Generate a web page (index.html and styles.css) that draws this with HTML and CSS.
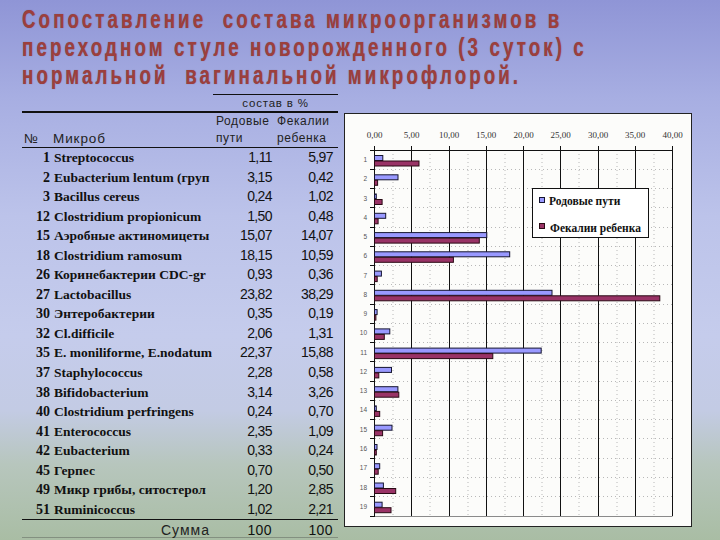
FILE: index.html
```html
<!DOCTYPE html>
<html lang="ru">
<head>
<meta charset="utf-8">
<link rel="stylesheet" href="styles.css">
</head>
<body>
<div class="page">
  <h1 class="title">
    <span class="tl">Сопоставление&nbsp; состава микроорганизмов в</span>
    <span class="tl">переходном стуле новорожденного (3 суток) с</span>
    <span class="tl">нормальной&nbsp; вагинальной микрофлорой.</span>
  </h1>
  <div class="content">
    <div class="table">
      <div class="hdr-top">состав в %</div>
      <div class="hdr">
        <div class="h-no">№</div>
        <div class="h-name">Микроб</div>
        <div class="h-c1">Родовые<br>пути</div>
        <div class="h-c2">Фекалии<br>ребенка</div>
      </div>
      <div class="rows">
        <div class="n">1</div><div class="nm">Streptococcus</div><div class="v">1,11</div><div class="v">5,97</div>
        <div class="n">2</div><div class="nm">Eubacterium lentum (груп</div><div class="v">3,15</div><div class="v">0,42</div>
        <div class="n">3</div><div class="nm">Bacillus cereus</div><div class="v">0,24</div><div class="v">1,02</div>
        <div class="n">12</div><div class="nm">Clostridium propionicum</div><div class="v">1,50</div><div class="v">0,48</div>
        <div class="n">15</div><div class="nm">Аэробные актиномицеты</div><div class="v">15,07</div><div class="v">14,07</div>
        <div class="n">18</div><div class="nm">Clostridium ramosum</div><div class="v">18,15</div><div class="v">10,59</div>
        <div class="n">26</div><div class="nm">Коринебактерии CDC-gr</div><div class="v">0,93</div><div class="v">0,36</div>
        <div class="n">27</div><div class="nm">Lactobacillus</div><div class="v">23,82</div><div class="v">38,29</div>
        <div class="n">30</div><div class="nm">Энтеробактерии</div><div class="v">0,35</div><div class="v">0,19</div>
        <div class="n">32</div><div class="nm">Cl.difficile</div><div class="v">2,06</div><div class="v">1,31</div>
        <div class="n">35</div><div class="nm">E. moniliforme, E.nodatum</div><div class="v">22,37</div><div class="v">15,88</div>
        <div class="n">37</div><div class="nm">Staphylococcus</div><div class="v">2,28</div><div class="v">0,58</div>
        <div class="n">38</div><div class="nm">Bifidobacterium</div><div class="v">3,14</div><div class="v">3,26</div>
        <div class="n">40</div><div class="nm">Clostridium perfringens</div><div class="v">0,24</div><div class="v">0,70</div>
        <div class="n">41</div><div class="nm">Enterococcus</div><div class="v">2,35</div><div class="v">1,09</div>
        <div class="n">42</div><div class="nm">Eubacterium</div><div class="v">0,33</div><div class="v">0,24</div>
        <div class="n">45</div><div class="nm">Герпес</div><div class="v">0,70</div><div class="v">0,50</div>
        <div class="n">49</div><div class="nm">Микр грибы, ситостерол</div><div class="v">1,20</div><div class="v">2,85</div>
        <div class="n">51</div><div class="nm">Ruminicoccus</div><div class="v">1,02</div><div class="v">2,21</div>
      </div>
      <div class="sum">
        <div class="s-lbl">Сумма</div><div class="v">100</div><div class="v">100</div>
      </div>
    </div>
    <div class="chart">
      <svg class="chart-svg" width="346" height="412" viewBox="0 0 346 412">
        <g class="minor" stroke="#b8b8b8" stroke-width="1" stroke-dasharray="1 3">
          <line x1="48" y1="36" x2="48" y2="402"/><line x1="85" y1="36" x2="85" y2="402"/>
          <line x1="123" y1="36" x2="123" y2="402"/><line x1="160" y1="36" x2="160" y2="402"/>
          <line x1="197" y1="36" x2="197" y2="402"/><line x1="234" y1="36" x2="234" y2="402"/>
          <line x1="272" y1="36" x2="272" y2="402"/><line x1="309" y1="36" x2="309" y2="402"/>
          <line x1="30" y1="55.5" x2="327" y2="55.5"/><line x1="30" y1="74.5" x2="327" y2="74.5"/>
          <line x1="30" y1="93.5" x2="327" y2="93.5"/><line x1="30" y1="113.5" x2="327" y2="113.5"/>
          <line x1="30" y1="132.5" x2="327" y2="132.5"/><line x1="30" y1="151.5" x2="327" y2="151.5"/>
          <line x1="30" y1="170.5" x2="327" y2="170.5"/><line x1="30" y1="190.5" x2="327" y2="190.5"/>
          <line x1="30" y1="209.5" x2="327" y2="209.5"/><line x1="30" y1="228.5" x2="327" y2="228.5"/>
          <line x1="30" y1="247.5" x2="327" y2="247.5"/><line x1="30" y1="267.5" x2="327" y2="267.5"/>
          <line x1="30" y1="286.5" x2="327" y2="286.5"/><line x1="30" y1="305.5" x2="327" y2="305.5"/>
          <line x1="30" y1="324.5" x2="327" y2="324.5"/><line x1="30" y1="344.5" x2="327" y2="344.5"/>
          <line x1="30" y1="363.5" x2="327" y2="363.5"/><line x1="30" y1="382.5" x2="327" y2="382.5"/>
        </g>
        <line x1="29.5" y1="402.5" x2="327.5" y2="402.5" stroke="#8a8a8a" stroke-width="1"/>
        <g stroke="#111" stroke-width="1">
          <line x1="66.5" y1="32" x2="66.5" y2="402"/><line x1="104.5" y1="32" x2="104.5" y2="402"/>
          <line x1="141.5" y1="32" x2="141.5" y2="402"/><line x1="178.5" y1="32" x2="178.5" y2="402"/>
          <line x1="215.5" y1="32" x2="215.5" y2="402"/><line x1="253.5" y1="32" x2="253.5" y2="402"/>
          <line x1="290.5" y1="32" x2="290.5" y2="402"/><line x1="327.5" y1="32" x2="327.5" y2="402"/>
          <line x1="29.5" y1="32" x2="29.5" y2="403"/>
          <line x1="29.5" y1="36.5" x2="327.5" y2="36.5"/>
          <line x1="25" y1="36.5" x2="29.5" y2="36.5"/><line x1="25" y1="55.5" x2="29.5" y2="55.5"/>
          <line x1="25" y1="74.5" x2="29.5" y2="74.5"/><line x1="25" y1="93.5" x2="29.5" y2="93.5"/>
          <line x1="25" y1="113.5" x2="29.5" y2="113.5"/><line x1="25" y1="132.5" x2="29.5" y2="132.5"/>
          <line x1="25" y1="151.5" x2="29.5" y2="151.5"/><line x1="25" y1="170.5" x2="29.5" y2="170.5"/>
          <line x1="25" y1="190.5" x2="29.5" y2="190.5"/><line x1="25" y1="209.5" x2="29.5" y2="209.5"/>
          <line x1="25" y1="228.5" x2="29.5" y2="228.5"/><line x1="25" y1="247.5" x2="29.5" y2="247.5"/>
          <line x1="25" y1="267.5" x2="29.5" y2="267.5"/><line x1="25" y1="286.5" x2="29.5" y2="286.5"/>
          <line x1="25" y1="305.5" x2="29.5" y2="305.5"/><line x1="25" y1="324.5" x2="29.5" y2="324.5"/>
          <line x1="25" y1="344.5" x2="29.5" y2="344.5"/><line x1="25" y1="363.5" x2="29.5" y2="363.5"/>
          <line x1="25" y1="382.5" x2="29.5" y2="382.5"/><line x1="25" y1="402.5" x2="29.5" y2="402.5"/>
        </g>
        <g class="xlab" text-anchor="middle">
          <text x="29.5" y="24">0,00</text><text x="66.5" y="24">5,00</text>
          <text x="104" y="24">10,00</text><text x="141" y="24">15,00</text>
          <text x="178.5" y="24">20,00</text><text x="215.5" y="24">25,00</text>
          <text x="253" y="24">30,00</text><text x="290" y="24">35,00</text>
          <text x="327.5" y="24">40,00</text>
        </g>
        <g class="ylab" text-anchor="end">
          <text x="22" y="48">1</text><text x="22" y="67.3">2</text><text x="22" y="86.5">3</text>
          <text x="22" y="105.8">4</text><text x="22" y="125">5</text><text x="22" y="144.3">6</text>
          <text x="22" y="163.6">7</text><text x="22" y="182.8">8</text><text x="22" y="202.1">9</text>
          <text x="22" y="221.4">10</text><text x="22" y="240.6">11</text><text x="22" y="259.9">12</text>
          <text x="22" y="279.2">13</text><text x="22" y="298.4">14</text><text x="22" y="317.7">15</text>
          <text x="22" y="337">16</text><text x="22" y="356.2">17</text><text x="22" y="375.5">18</text>
          <text x="22" y="394.7">19</text>
        </g>
        <g class="bars-a" fill="#9999ff" stroke="#151530" stroke-width="1">
          <rect x="29.5" y="41.5" width="8.3" height="5"/>
          <rect x="29.5" y="60.8" width="23.5" height="5"/>
          <rect x="29.5" y="80" width="1.8" height="5"/>
          <rect x="29.5" y="99.3" width="11.2" height="5"/>
          <rect x="29.5" y="118.6" width="112.3" height="5"/>
          <rect x="29.5" y="137.8" width="135.2" height="5"/>
          <rect x="29.5" y="157.1" width="6.9" height="5"/>
          <rect x="29.5" y="176.3" width="177.5" height="5"/>
          <rect x="29.5" y="195.6" width="2.6" height="5"/>
          <rect x="29.5" y="214.9" width="15.3" height="5"/>
          <rect x="29.5" y="234.1" width="166.7" height="5"/>
          <rect x="29.5" y="253.4" width="17" height="5"/>
          <rect x="29.5" y="272.7" width="23.4" height="5"/>
          <rect x="29.5" y="291.9" width="1.8" height="5"/>
          <rect x="29.5" y="311.2" width="17.5" height="5"/>
          <rect x="29.5" y="330.5" width="2.5" height="5"/>
          <rect x="29.5" y="349.7" width="5.2" height="5"/>
          <rect x="29.5" y="369" width="8.9" height="5"/>
          <rect x="29.5" y="388.2" width="7.6" height="5"/>
        </g>
        <g class="bars-b" fill="#993366" stroke="#2a0a14" stroke-width="1">
          <rect x="29.5" y="47" width="44.5" height="5"/>
          <rect x="29.5" y="66.3" width="3.1" height="5"/>
          <rect x="29.5" y="85.5" width="7.6" height="5"/>
          <rect x="29.5" y="104.8" width="3.6" height="5"/>
          <rect x="29.5" y="124.1" width="104.8" height="5"/>
          <rect x="29.5" y="143.3" width="78.9" height="5"/>
          <rect x="29.5" y="162.6" width="2.7" height="5"/>
          <rect x="29.5" y="181.8" width="285.3" height="5"/>
          <rect x="29.5" y="201.1" width="1.4" height="5"/>
          <rect x="29.5" y="220.4" width="9.8" height="5"/>
          <rect x="29.5" y="239.6" width="118.3" height="5"/>
          <rect x="29.5" y="258.9" width="4.3" height="5"/>
          <rect x="29.5" y="278.2" width="24.3" height="5"/>
          <rect x="29.5" y="297.4" width="5.2" height="5"/>
          <rect x="29.5" y="316.7" width="8.1" height="5"/>
          <rect x="29.5" y="336" width="1.8" height="5"/>
          <rect x="29.5" y="355.2" width="3.7" height="5"/>
          <rect x="29.5" y="374.5" width="21.2" height="5"/>
          <rect x="29.5" y="393.7" width="16.5" height="5"/>
        </g>
        <g class="legend">
          <rect x="187.5" y="74.5" width="116" height="49" fill="#ffffff" stroke="#111" stroke-width="1"/>
          <rect x="194.5" y="83.5" width="5" height="5" fill="#9999ff" stroke="#151530" stroke-width="1"/>
          <text x="204" y="91">Родовые пути</text>
          <rect x="194.5" y="109.5" width="5" height="5" fill="#993366" stroke="#2a0a14" stroke-width="1"/>
          <text x="205" y="117.5">Фекалии ребенка</text>
        </g>
      </svg>
    </div>
  </div>
</div>
</body>
</html>
```

FILE: styles.css
```css
html, body {
  margin: 0;
  padding: 0;
}
body {
  width: 720px;
  height: 540px;
  overflow: hidden;
  background: linear-gradient(180deg, #8f95d6 0%, #a7aee2 18%, #bcc3ea 40%, #c5ccec 62%, #c3cbe4 76%, #b7c6bd 86%, #a9bda4 100%);
  font-family: "Liberation Sans", Arial, sans-serif;
  color: #111;
}
.page {
  padding: 5px 0 0 22px;
}
.title {
  margin: 0;
  font-family: "Liberation Sans", Arial, sans-serif;
  font-weight: bold;
  font-size: 26px;
  line-height: 28px;
  letter-spacing: 4.3px;
  color: #9c3f3d;
  white-space: nowrap;
  transform: scaleX(0.72);
  transform-origin: 0 0;
  text-shadow: 0 0 1px rgba(90, 30, 30, 0.5);
}
.tl {
  display: block;
}
.content {
  display: flex;
  align-items: flex-start;
  margin-top: 5px;
}
.table {
  width: 316px;
}
.hdr-top {
  margin-left: 191px;
  border-top: 1px solid #111;
  height: 16px;
  line-height: 16px;
  text-align: center;
  font-size: 11.5px;
  letter-spacing: 0.8px;
  color: #222;
}
.hdr {
  display: grid;
  grid-template-columns: 28px 163px 61px 64px;
  border-top: 2px solid #111;
  border-bottom: 1px solid #111;
  height: 34px;
  font-size: 12px;
  line-height: 17px;
  letter-spacing: 0.6px;
  color: #222;
}
.h-no {
  padding-top: 17px;
  padding-left: 2px;
  font-size: 13px;
}
.h-name {
  padding-top: 17px;
  padding-left: 3px;
  font-size: 13.5px;
  letter-spacing: 0.9px;
}
.h-c1 {
  padding-left: 3px;
}
.h-c2 {
  padding-left: 3px;
}
.rows, .sum {
  display: grid;
  grid-template-columns: 28px 163px 59px 61px;
  grid-auto-rows: 19.56px;
  line-height: 19.56px;
}
.n {
  text-align: right;
  font-family: "Liberation Serif", "Times New Roman", serif;
  font-weight: bold;
  font-size: 14px;
}
.nm {
  padding-left: 4px;
  font-family: "Liberation Serif", "Times New Roman", serif;
  font-weight: bold;
  font-size: 13.5px;
  white-space: nowrap;
  overflow: hidden;
}
.v {
  text-align: right;
  font-size: 14px;
  letter-spacing: -0.6px;
}
.sum {
  border-top: 1px solid #111;
  grid-auto-rows: 17px;
  line-height: 20px;
  border-bottom: 1px solid rgba(60, 60, 60, 0.35);
}
.s-lbl {
  grid-column: 1 / 3;
  text-align: right;
  padding-right: 3px;
  font-size: 14px;
  letter-spacing: 1px;
  color: #222;
}
.sum .v {
  letter-spacing: 0.4px;
}
.chart {
  margin: 19px 0 0 6px;
  width: 346px;
  height: 412px;
  border: 1px solid #222;
  background: #fcfcfa;
}
.chart-svg {
  display: block;
}
.xlab text {
  font-family: "Liberation Serif", "Times New Roman", serif;
  font-size: 9px;
  fill: #333;
}
.ylab text {
  font-family: "Liberation Sans", Arial, sans-serif;
  font-size: 6.5px;
  fill: #555;
}
.legend text {
  font-family: "Liberation Serif", "Times New Roman", serif;
  font-weight: bold;
  font-size: 11.5px;
  fill: #111;
}
```
